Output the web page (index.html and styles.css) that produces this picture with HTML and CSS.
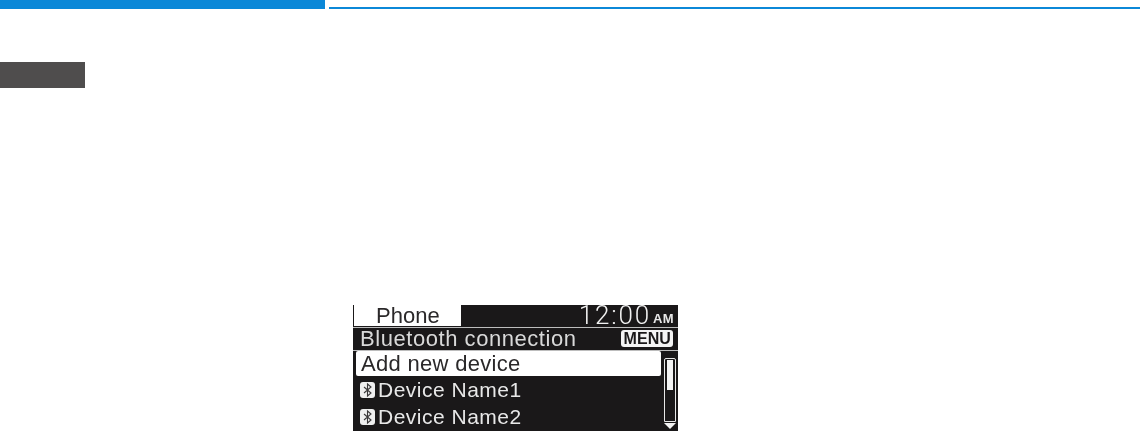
FILE: index.html
```html
<!DOCTYPE html>
<html lang="en">
<head>
<meta charset="utf-8">
<title>Phone Bluetooth connection</title>
<link rel="stylesheet" href="styles.css">
</head>
<body>
<header class="topbar">
  <div class="topbar-tab"></div>
  <div class="topbar-line"></div>
</header>
<div class="section-tag"></div>
<main class="figure">
  <div class="screen">
    <div class="status">
      <div class="tab">Phone</div>
      <div class="clock"><span class="time">12:00</span><span class="ampm">AM</span></div>
    </div>
    <div class="title-row">
      <span class="title">Bluetooth connection</span>
      <span class="menu">MENU</span>
    </div>
    <div class="body">
      <ul class="list">
        <li class="item selected">Add new device</li>
        <li class="item">
          <svg class="bt" viewBox="0 0 15 16"><rect width="15" height="16" rx="3" fill="#efefef"/><path d="M4 5l7 6-3.500 3V2L11 5l-7 6" fill="none" stroke="#3a3839" stroke-width="1.100"/></svg>Device Name1
        </li>
        <li class="item">
          <svg class="bt" viewBox="0 0 15 16"><rect width="15" height="16" rx="3" fill="#efefef"/><path d="M4 5l7 6-3.500 3V2L11 5l-7 6" fill="none" stroke="#3a3839" stroke-width="1.100"/></svg>Device Name2
        </li>
      </ul>
      <div class="scroll">
        <div class="track"><div class="thumb"></div></div>
        <div class="arrow"></div>
      </div>
    </div>
  </div>
</main>
</body>
</html>
```
FILE: styles.css
```css
html, body {
  margin: 0;
  padding: 0;
  background: #fff;
}
body {
  height: 431px;
  overflow: hidden;
  font-family: "Liberation Sans", Arial, sans-serif;
}
.topbar {
  display: flex;
  gap: 4px;
  align-items: flex-end;
  height: 9px;
}
.topbar-tab {
  width: 325px;
  height: 9px;
  background: #0b88d8;
}
.topbar-line {
  flex: 1;
  height: 2px;
  background: #0b88d8;
}
.section-tag {
  width: 85px;
  height: 26px;
  margin-top: 53px;
  background: #4f4d4d;
}
.figure {
  margin: 217px 0 0 353px;
}
.screen {
  width: 325px;
  height: 126px;
  background: #1a1819;
  color: #e8e8e8;
  display: flex;
  flex-direction: column;
  filter: blur(0.45px);
}
.status {
  display: flex;
  height: 21px;
  margin-left: 1px;
}
.tab {
  width: 107px;
  background: #fff;
  color: #2a2829;
  font-size: 22px;
  line-height: 21px;
  padding-left: 22px;
  box-sizing: border-box;
}
.clock {
  flex: 1;
  display: flex;
  justify-content: flex-end;
  align-items: flex-end;
  padding-right: 4px;
}
.time {
  font-family: Roboto, sans-serif;
  font-weight: 300;
  font-size: 26px;
  line-height: 21px;
  letter-spacing: 1.8px;
  color: #f2f2f2;
}
.ampm {
  font-size: 13px;
  font-weight: 700;
  line-height: 15px;
  margin-left: 2px;
  letter-spacing: 0.4px;
  color: #e8e8e8;
}
.title-row {
  display: flex;
  justify-content: space-between;
  align-items: center;
  height: 24px;
  margin-top: 1px;
  padding: 0 5px 1px 7px;
  border-top: 1px solid #bdbdbd;
  border-bottom: 1px solid #bdbdbd;
  box-sizing: border-box;
}
.title {
  font-size: 22px;
  line-height: 21px;
  letter-spacing: 0.55px;
  color: #d9d9d9;
}
.menu {
  background: #f4f4f4;
  color: #1a1819;
  font-size: 16px;
  font-weight: 700;
  line-height: 17px;
  padding: 0 2px;
  border-radius: 3px;
  letter-spacing: 0.1px;
}
.body {
  display: flex;
  flex: 1;
  min-height: 0;
  padding: 0 1px 0 3px;
}
.list {
  list-style: none;
  margin: 0;
  padding: 0;
  flex: 1;
}
.item {
  display: flex;
  align-items: center;
  height: 26px;
  margin-bottom: 1px;
  padding-left: 4px;
  font-size: 21px;
  letter-spacing: 0.5px;
  white-space: nowrap;
}
.item.selected {
  height: 25px;
  background: #fff;
  color: #2a2829;
  border-radius: 2px;
  padding-left: 5px;
  font-size: 22px;
  letter-spacing: 0.3px;
}
.bt {
  width: 15px;
  height: 16px;
  margin-right: 3px;
  flex: none;
}
.scroll {
  width: 13px;
  margin-left: 3px;
  padding-top: 7px;
  display: flex;
  flex-direction: column;
  align-items: flex-start;
}
.track {
  width: 12px;
  height: 64px;
  border: 1px solid #e8e8e8;
  box-sizing: border-box;
  border-radius: 2px 2px 0 0;
  padding: 1px 2px;
}
.thumb {
  height: 30px;
  background: #f4f4f4;
}
.arrow {
  width: 0;
  height: 0;
  margin-top: 1px;
  border-left: 6px solid transparent;
  border-right: 6px solid transparent;
  border-top: 6px solid #f4f4f4;
}
```
